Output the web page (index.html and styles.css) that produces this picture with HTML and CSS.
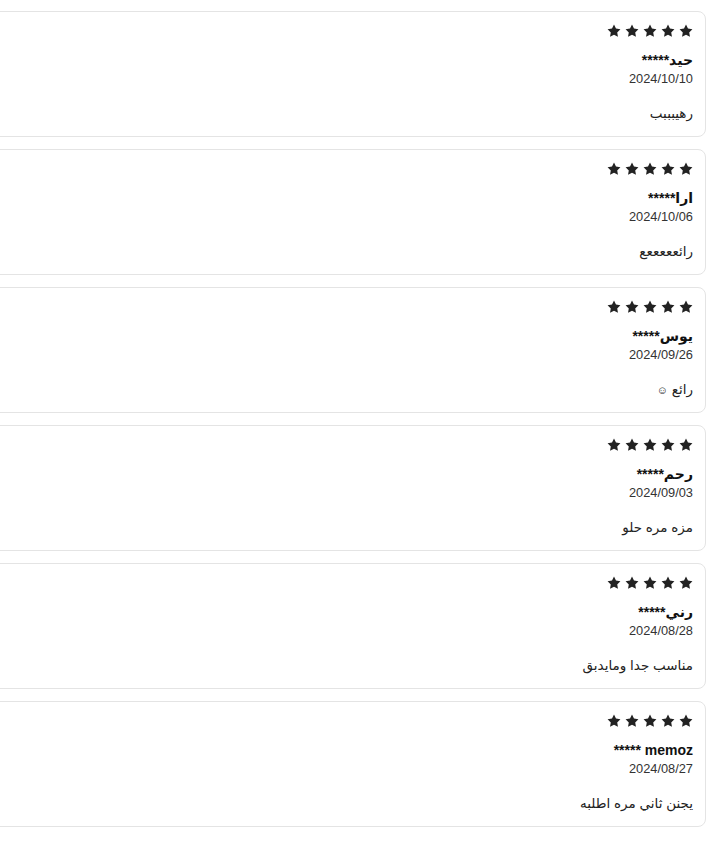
FILE: index.html
```html
<!DOCTYPE html>
<html lang="ar" dir="rtl">
<head>
    <meta charset="UTF-8">
    <meta name="viewport" content="width=device-width, initial-scale=1.0">
    <title>التقييمات</title>
    <link rel="stylesheet" href="styles.css">
</head>
<body>
    <svg width="0" height="0" class="defs">
        <symbol id="star" viewBox="0 0 24 24">
            <path d="M12 1l3.4 6.9 7.6 1.1-5.5 5.4 1.3 7.6L12 18.4l-6.8 3.6 1.3-7.6L1 9l7.6-1.1z"/>
        </symbol>
    </svg>
    <div class="reviews">
        <div class="review">
            <div class="stars">
                <svg><use href="#star"/></svg><svg><use href="#star"/></svg><svg><use href="#star"/></svg><svg><use href="#star"/></svg><svg><use href="#star"/></svg>
            </div>
            <div class="name">حيد*****</div>
            <div class="date">2024/10/10</div>
            <p class="comment">رهيبببب</p>
        </div>
        <div class="review">
            <div class="stars">
                <svg><use href="#star"/></svg><svg><use href="#star"/></svg><svg><use href="#star"/></svg><svg><use href="#star"/></svg><svg><use href="#star"/></svg>
            </div>
            <div class="name">ارا*****</div>
            <div class="date">2024/10/06</div>
            <p class="comment">رائعععععع</p>
        </div>
        <div class="review">
            <div class="stars">
                <svg><use href="#star"/></svg><svg><use href="#star"/></svg><svg><use href="#star"/></svg><svg><use href="#star"/></svg><svg><use href="#star"/></svg>
            </div>
            <div class="name">يوس*****</div>
            <div class="date">2024/09/26</div>
            <p class="comment">رائع <span class="smile">☺</span></p>
        </div>
        <div class="review">
            <div class="stars">
                <svg><use href="#star"/></svg><svg><use href="#star"/></svg><svg><use href="#star"/></svg><svg><use href="#star"/></svg><svg><use href="#star"/></svg>
            </div>
            <div class="name">رحم*****</div>
            <div class="date">2024/09/03</div>
            <p class="comment">مزه مره حلو</p>
        </div>
        <div class="review">
            <div class="stars">
                <svg><use href="#star"/></svg><svg><use href="#star"/></svg><svg><use href="#star"/></svg><svg><use href="#star"/></svg><svg><use href="#star"/></svg>
            </div>
            <div class="name">رني*****</div>
            <div class="date">2024/08/28</div>
            <p class="comment">مناسب جدا ومايدبق</p>
        </div>
        <div class="review">
            <div class="stars">
                <svg><use href="#star"/></svg><svg><use href="#star"/></svg><svg><use href="#star"/></svg><svg><use href="#star"/></svg><svg><use href="#star"/></svg>
            </div>
            <div class="name">memoz *****</div>
            <div class="date">2024/08/27</div>
            <p class="comment">يجنن ثاني مره اطلبه</p>
        </div>
    </div>
</body>
</html>
```

FILE: styles.css
```css
body {
    margin: 0;
    padding: 0;
    background-color: #fff;
    font-family: "Liberation Sans", "DejaVu Sans", sans-serif;
    color: #111;
    overflow: hidden;
}
.defs {
    position: absolute;
}
.reviews {
    display: flex;
    flex-direction: column;
    gap: 12px;
    padding-top: 11px;
    margin-right: 9px;
    margin-left: -30px;
}
.review {
    height: 126px;
    box-sizing: border-box;
    border: 1px solid #e4e4e4;
    border-radius: 8px;
    padding: 11px 12px 0 12px;
}
.stars {
    display: flex;
    gap: 4px;
    height: 16px;
    align-items: center;
}
.stars svg {
    width: 14px;
    height: 14px;
    fill: #222;
}
.name {
    margin-top: 12px;
    font-size: 14px;
    font-weight: bold;
    line-height: 18px;
    color: #111;
}
.date {
    font-size: 12.8px;
    line-height: 18px;
    color: #333;
    margin-top: 1px;
}
.comment {
    margin: 16px 0 0 0;
    font-size: 13.5px;
    line-height: 20px;
    color: #222;
}
.smile {
    font-size: 11px;
}
```
